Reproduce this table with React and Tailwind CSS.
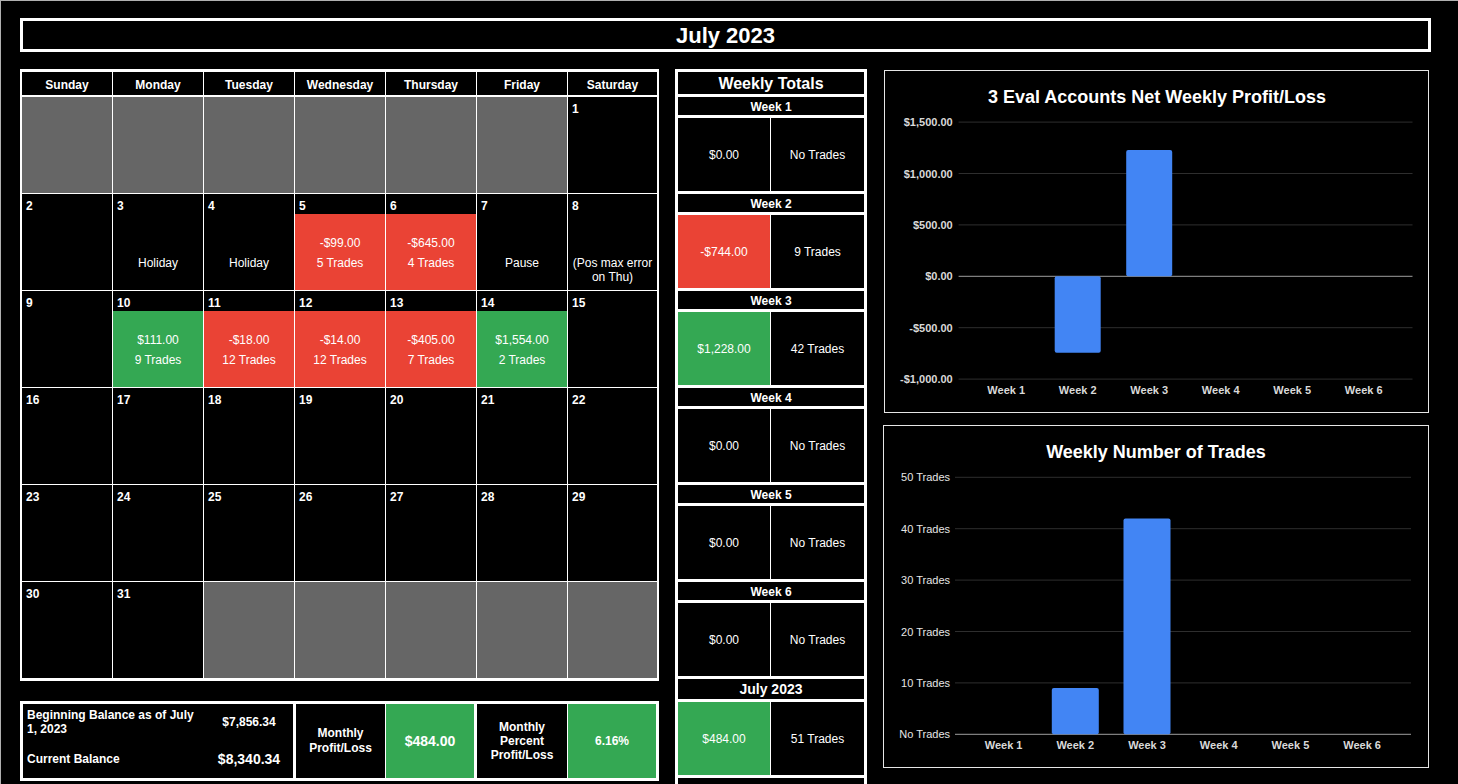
import React from "react";

const G = { gray: true };
const rows = [
  [G, G, G, G, G, G, { n: 1 }],
  [
    { n: 2 },
    { n: 3, b: "Holiday" },
    { n: 4, b: "Holiday" },
    { n: 5, a: "-$99.00", b: "5 Trades", c: "red" },
    { n: 6, a: "-$645.00", b: "4 Trades", c: "red" },
    { n: 7, b: "Pause" },
    { n: 8, b: "(Pos max error on Thu)" },
  ],
  [
    { n: 9 },
    { n: 10, a: "$111.00", b: "9 Trades", c: "green" },
    { n: 11, a: "-$18.00", b: "12 Trades", c: "red" },
    { n: 12, a: "-$14.00", b: "12 Trades", c: "red" },
    { n: 13, a: "-$405.00", b: "7 Trades", c: "red" },
    { n: 14, a: "$1,554.00", b: "2 Trades", c: "green" },
    { n: 15 },
  ],
  [16, 17, 18, 19, 20, 21, 22].map((n) => ({ n })),
  [23, 24, 25, 26, 27, 28, 29].map((n) => ({ n })),
  [{ n: 30 }, { n: 31 }, G, G, G, G, G],
];

const dayNames = ["Sunday", "Monday", "Tuesday", "Wednesday", "Thursday", "Friday", "Saturday"];

function DayCell({ d }) {
  if (d.gray) return <div className="h-[96px] bg-[#666666]" />;
  const bg =
    d.c === "red" ? "bg-[#ea4335]" : d.c === "green" ? "bg-[#34a853]" : "bg-black";
  return (
    <div className="h-[96px] bg-black flex flex-col">
      <div className="h-[20px] pt-[4px] leading-[16px] pl-[4px] text-[12px] font-bold">{d.n}</div>
      <div className={`flex-1 ${bg} flex flex-col items-center text-center text-[12px]`}>
        <div className="mt-[20px] h-[19px] leading-[19px]">{d.a}</div>
        <div className="pt-[3px] px-[2px] leading-[14px]">{d.b}</div>
      </div>
    </div>
  );
}

const weeks = [
  { t: "Week 1", v: "$0.00", n: "No Trades" },
  { t: "Week 2", v: "-$744.00", n: "9 Trades", c: "red" },
  { t: "Week 3", v: "$1,228.00", n: "42 Trades", c: "green" },
  { t: "Week 4", v: "$0.00", n: "No Trades" },
  { t: "Week 5", v: "$0.00", n: "No Trades" },
  { t: "Week 6", v: "$0.00", n: "No Trades" },
];

function WeekData({ w }) {
  const bg =
    w.c === "red" ? "bg-[#ea4335]" : w.c === "green" ? "bg-[#34a853]" : "bg-black";
  return (
    <div className="h-[73px] grid grid-cols-[92px_93px] gap-px">
      <div className={`${bg} flex items-center justify-center text-[12px]`}>{w.v}</div>
      <div className="bg-black flex items-center justify-center text-[12px]">{w.n}</div>
    </div>
  );
}

function Chart1() {
  const ticks = ["$1,500.00", "$1,000.00", "$500.00", "$0.00", "-$500.00", "-$1,000.00"];
  const vals = [0, -744, 1228, 0, 0, 0];
  const y0 = 205.3;
  const k = 51.4 / 500;
  return (
    <svg width="543" height="341" className="block">
      <text x="272" y="32" textAnchor="middle" fill="#ffffff" fontSize="18" fontWeight="bold">
        3 Eval Accounts Net Weekly Profit/Loss
      </text>
      {ticks.map((t, i) => {
        const y = 51.1 + i * 51.4;
        return (
          <g key={t}>
            <line x1="73.6" x2="527.5" y1={y} y2={y} stroke={i === 3 ? "#9e9e9e" : "#2e2e2e"} strokeWidth="1" />
            <text x="67.7" y={y + 4} textAnchor="end" fill="#d9d9d9" fontSize="11" fontWeight="bold">
              {t}
            </text>
          </g>
        );
      })}
      {vals.map((v, i) => {
        const cx = 121.2 + i * 71.5;
        const h = Math.abs(v) * k;
        return (
          <g key={i}>
            {v !== 0 && (
              <rect x={cx - 23} width="46" y={v > 0 ? y0 - h : y0} height={h} rx="2" fill="#4285f4" />
            )}
            <text x={cx} y="323" textAnchor="middle" fill="#d9d9d9" fontSize="11" fontWeight="bold">
              Week {i + 1}
            </text>
          </g>
        );
      })}
    </svg>
  );
}

function Chart2() {
  const ticks = ["50 Trades", "40 Trades", "30 Trades", "20 Trades", "10 Trades", "No Trades"];
  const vals = [0, 9, 42, 0, 0, 0];
  const base = 308.3;
  return (
    <svg width="543" height="341" className="block">
      <text x="272" y="32" textAnchor="middle" fill="#ffffff" fontSize="18" fontWeight="bold">
        Weekly Number of Trades
      </text>
      {ticks.map((t, i) => {
        const y = 51.3 + i * 51.4;
        return (
          <g key={t}>
            <line x1="71" x2="527" y1={y} y2={y} stroke={i === 5 ? "#9e9e9e" : "#2e2e2e"} strokeWidth="1" />
            <text x="66" y={y + 4} textAnchor="end" fill="#e6e6e6" fontSize="11">
              {t}
            </text>
          </g>
        );
      })}
      {vals.map((v, i) => {
        const cx = 119.6 + i * 71.7;
        const h = v * 5.14;
        return (
          <g key={i}>
            {v !== 0 && <rect x={cx - 23.5} width="47" y={base - h} height={h} rx="2" fill="#4285f4" />}
            <text x={cx} y="323" textAnchor="middle" fill="#d9d9d9" fontSize="11" fontWeight="bold">
              Week {i + 1}
            </text>
          </g>
        );
      })}
    </svg>
  );
}

export default function App() {
  return (
    <div className="h-[784px] w-[1458px] overflow-hidden bg-black text-white border-t border-l border-[#b0b0b0] pt-[17px] pl-[19px] font-['Liberation_Sans',Arial,sans-serif]">
      <div className="w-[1411px] h-[34px] border-[3px] border-white flex items-center justify-center text-[22px] font-bold">
        July 2023
      </div>
      <div className="mt-[17px] flex items-start">
        {/* Left column */}
        <div className="w-[639px] flex flex-col">
          <div className="border-y-[3px] border-x-[2px] border-white bg-white">
            <div className="grid grid-cols-[90px_90px_90px_90px_90px_90px_1fr] gap-px">
              {dayNames.map((n) => (
                <div key={n} className="h-[23px] pt-[2px] bg-black flex items-center justify-center text-[12px] font-bold">
                  {n}
                </div>
              ))}
            </div>
            <div className="h-[2px]" />
            <div className="grid grid-cols-[90px_90px_90px_90px_90px_90px_1fr] gap-px">
              {rows.flat().map((d, i) => (
                <DayCell key={i} d={d} />
              ))}
            </div>
          </div>
          <div className="mt-[20px] h-[80px] border-[3px] border-white bg-white flex">
            <div className="w-[270px] bg-black grid grid-cols-[182px_88px] grid-rows-[36px_38px]">
              <div className="pl-[4px] flex items-center text-[12px] font-bold leading-[14px]">
                <span>
                  Beginning Balance as of July
                  <br />
                  1, 2023
                </span>
              </div>
              <div className="flex items-center justify-center text-[12px] font-bold">$7,856.34</div>
              <div className="pl-[4px] flex items-center text-[12px] font-bold">Current Balance</div>
              <div className="flex items-center justify-center text-[14px] font-bold">$8,340.34</div>
            </div>
            <div className="ml-[3px] w-[89px] bg-black flex items-center justify-center text-center text-[12px] font-bold leading-[15px]">
              <span>
                Monthly
                <br />
                Profit/Loss
              </span>
            </div>
            <div className="ml-px w-[88px] bg-[#34a853] flex items-center justify-center text-[14px] font-bold">
              $484.00
            </div>
            <div className="ml-[3px] w-[90px] bg-black flex items-center justify-center text-center text-[12px] font-bold leading-[14px]">
              <span>
                Monthly
                <br />
                Percent
                <br />
                Profit/Loss
              </span>
            </div>
            <div className="ml-px w-[88px] bg-[#34a853] flex items-center justify-center text-[12px] font-bold">
              6.16%
            </div>
          </div>
        </div>

        {/* Weekly totals */}
        <div className="ml-[16px] w-[192px] bg-white px-[3px] pt-[3px] flex flex-col gap-[3px]">
          <div className="h-[22px] pt-[1px] bg-black flex items-center justify-center text-[16px] font-bold">
            Weekly Totals
          </div>
          {weeks.map((w) => (
            <React.Fragment key={w.t}>
              <div className="h-[18px] pt-[1px] bg-black flex items-center justify-center text-[12px] font-bold">
                {w.t}
              </div>
              <WeekData w={w} />
            </React.Fragment>
          ))}
          <div className="h-[20px] bg-black flex items-center justify-center text-[14px] font-bold">
            July 2023
          </div>
          <WeekData w={{ v: "$484.00", n: "51 Trades", c: "green" }} />
          <div className="h-[20px] bg-black" />
        </div>

        {/* Charts */}
        <div className="ml-[17px] w-[545px] flex flex-col">
          <div className="mt-px h-[343px] border border-[#e6e6e6]">
            <Chart1 />
          </div>
          <div className="mt-[12px] -ml-px h-[343px] border border-[#e6e6e6]">
            <Chart2 />
          </div>
        </div>
      </div>
    </div>
  );
}
